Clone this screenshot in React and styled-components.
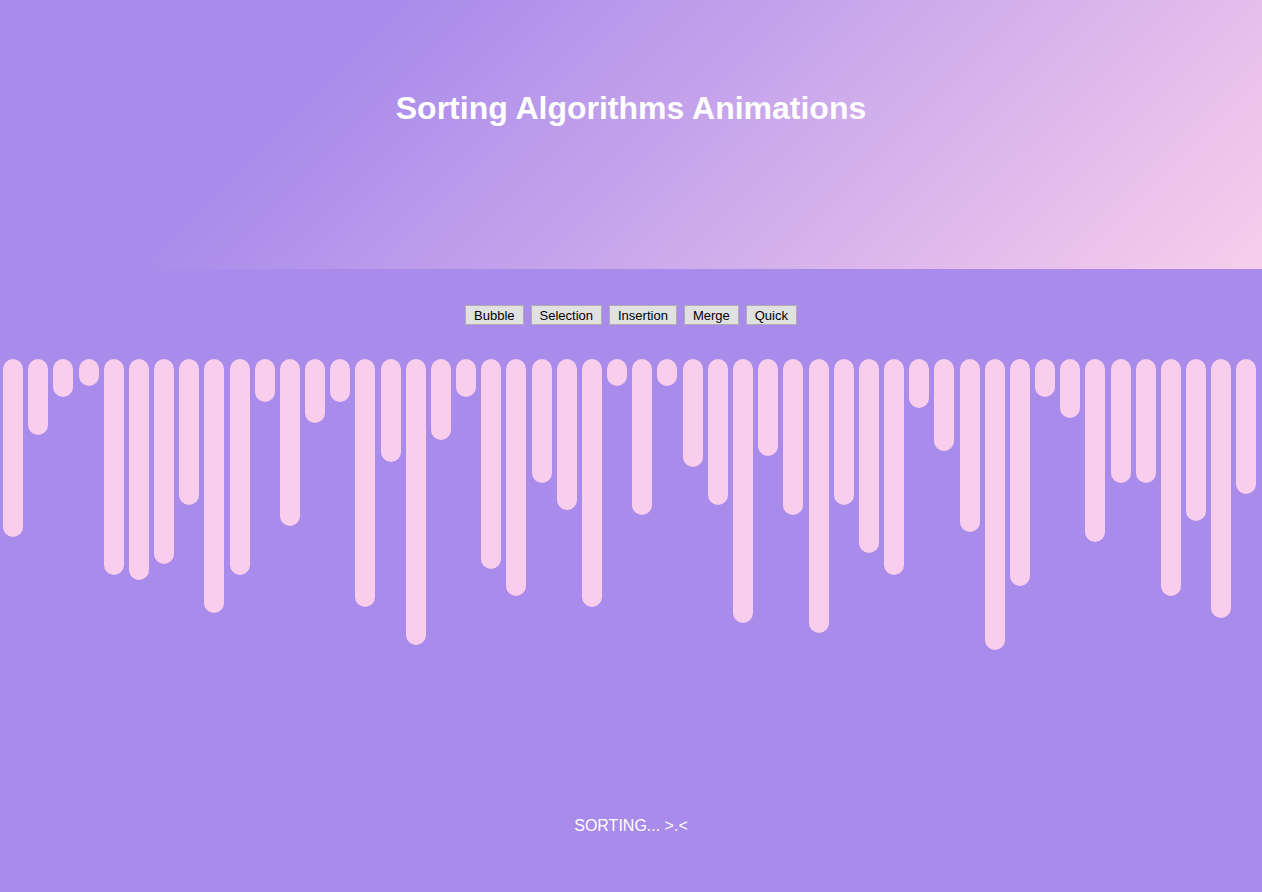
import React from "react";
import styled, { createGlobalStyle } from "styled-components";

const GlobalStyle = createGlobalStyle`
  html, body {
    margin: 0;
    padding: 0;
    background: #a88beb;
    font-family: "Liberation Sans", Arial, sans-serif;
  }
`;

const Page = styled.div`
  display: flex;
  flex-direction: column;
  min-height: 892px;
  background: #a88beb;
`;

const Header = styled.header`
  height: 269px;
  display: flex;
  justify-content: center;
  align-items: flex-start;
  background-color: #a88beb;
  background-image: linear-gradient(315deg, #f8ceec 0%, #a88beb 74%);
`;

const Title = styled.h1`
  margin: 90px 0 0;
  color: #ffffff;
  font-size: 32px;
  font-weight: bold;
  line-height: 37px;
`;

const Toolbar = styled.div`
  display: flex;
  justify-content: center;
  gap: 7px;
  margin-top: 36px;
`;

const AlgoButton = styled.button`
  height: 20px;
  padding: 0 8px;
  font-family: "Liberation Sans", Arial, sans-serif;
  font-size: 13px;
  color: #000;
  background: #e1e1e1;
  border: 1px solid #adadad;
  border-radius: 0;
  cursor: pointer;
`;

const BarRow = styled.div`
  display: flex;
  justify-content: space-between;
  align-items: flex-start;
  height: 441px;
  padding: 0 5px 0 3px;
  margin-top: 34px;
`;

const Bar = styled.div`
  width: 20px;
  border-radius: 10px;
  background: #f8ceec;
  flex-shrink: 0;
`;

const Status = styled.p`
  margin: 17px 0 0;
  text-align: center;
  color: #ffffff;
  font-size: 16px;
  line-height: 18px;
`;

const heights = [
  178, 76, 38, 27, 216, 221, 205, 146, 254, 216,
  43, 167, 64, 43, 248, 103, 286, 81, 38, 210,
  237, 124, 151, 248, 27, 156, 27, 108, 146, 264,
  97, 156, 274, 146, 194, 216, 49, 92, 173, 291,
  227, 38, 59, 183, 124, 124, 237, 162, 259, 135,
];

const algorithms = ["Bubble", "Selection", "Insertion", "Merge", "Quick"];

const App = () => {
  return (
    <>
      <GlobalStyle />
      <Page>
        <Header>
          <Title>Sorting Algorithms Animations</Title>
        </Header>
        <Toolbar>
          {algorithms.map((name) => (
            <AlgoButton key={name}>{name}</AlgoButton>
          ))}
        </Toolbar>
        <BarRow>
          {heights.map((h, i) => (
            <Bar key={i} style={{ height: h }} />
          ))}
        </BarRow>
        <Status>SORTING... &gt;.&lt;</Status>
      </Page>
    </>
  );
};

export default App;
